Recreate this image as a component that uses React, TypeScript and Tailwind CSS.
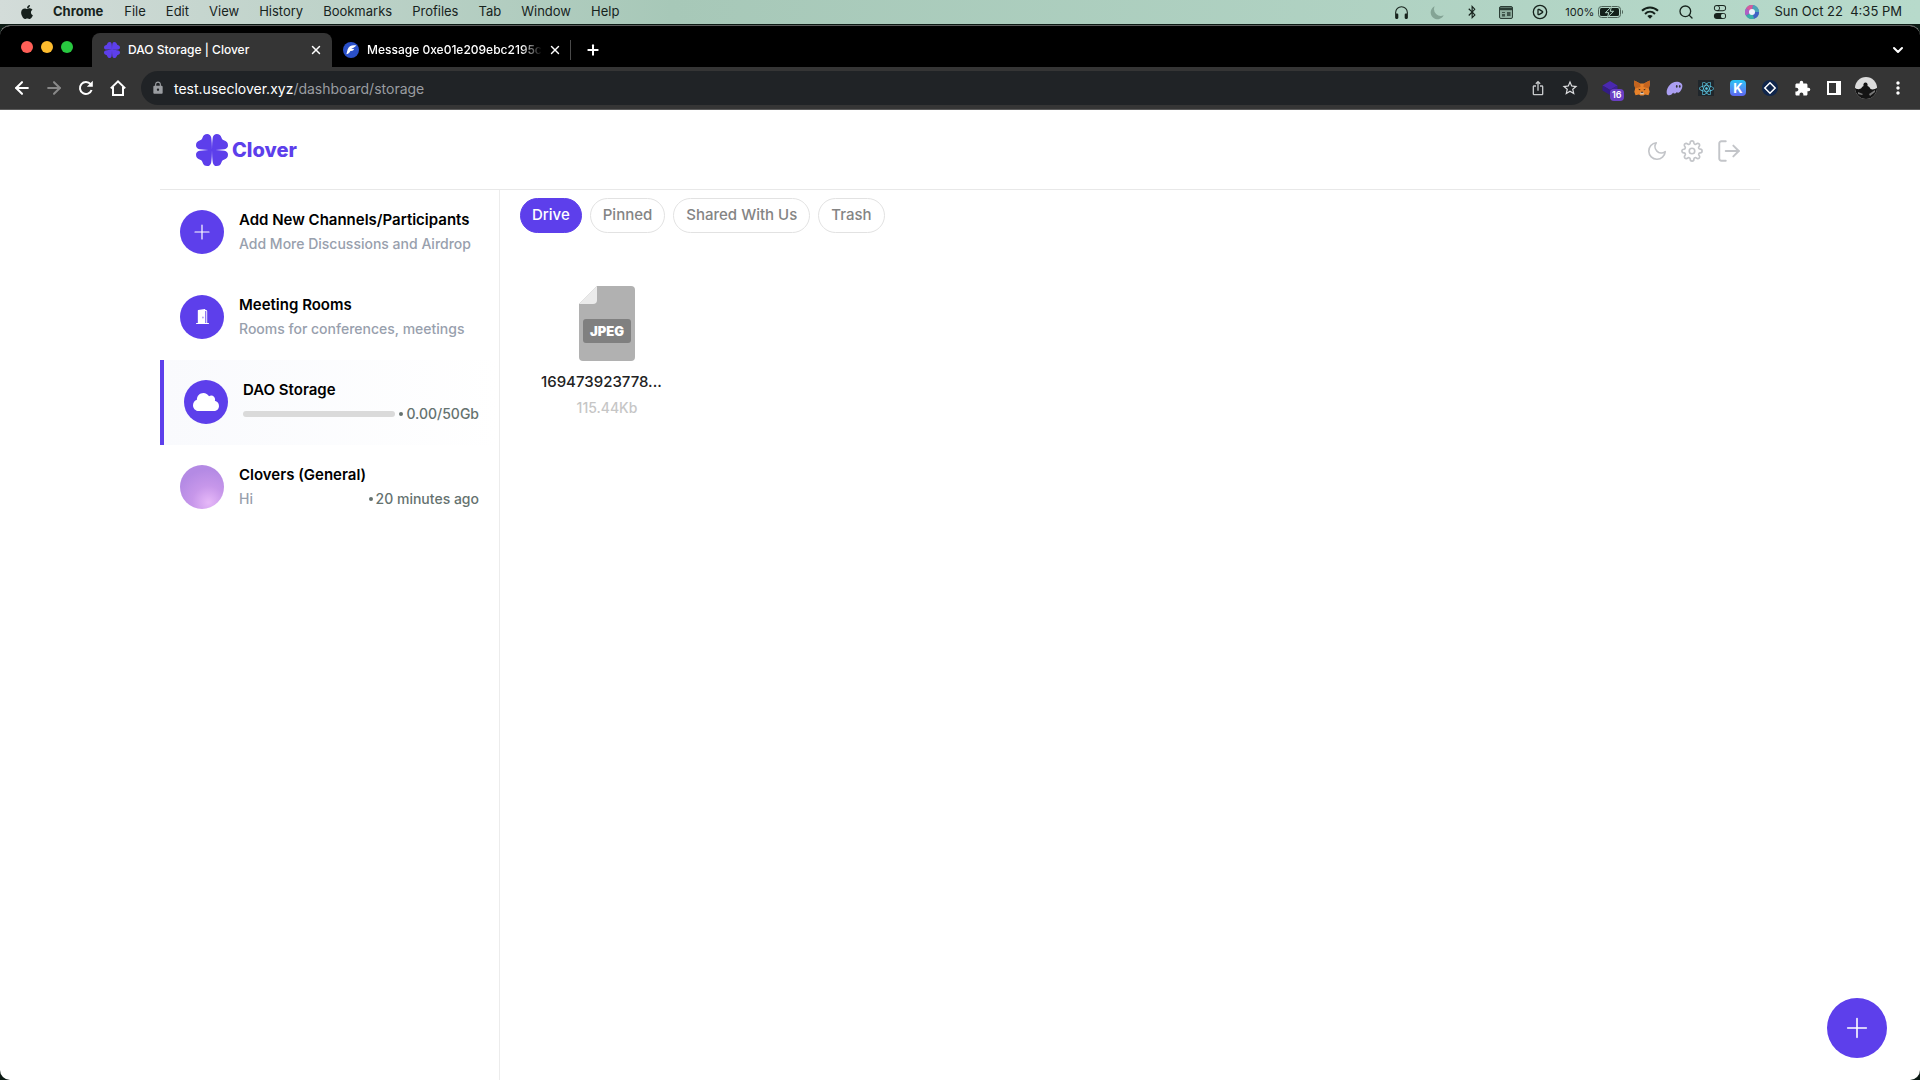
import type { ReactNode } from 'react';
import { BsDoorOpenFill, BsHeadphones, BsToggles } from 'react-icons/bs';
import { FaApple, FaBluetoothB, FaCloud, FaReact } from 'react-icons/fa';
import { FiMoon, FiSettings } from 'react-icons/fi';
import { HiMoon } from 'react-icons/hi';
import { MdExtension, MdIosShare, MdLock, MdMoreVert, MdStarBorder } from 'react-icons/md';
import { ArrowLeft, ArrowRight, ChevronDown, CirclePlay, LogOut, Plus, Search, X } from 'lucide-react';

const MENUS = ['File', 'Edit', 'View', 'History', 'Bookmarks', 'Profiles', 'Tab', 'Window', 'Help'];
const FILTERS = ['Drive', 'Pinned', 'Shared With Us', 'Trash'];

function Clover({ className }: { className: string }) {
  const leaf =
    'M16 16C15.9 11 15.8 7 15.2 3.6C14.8 1.2 13.2 0 11.2 0C8.8 0 7.2 1.4 6.6 3.6C6.2 5.2 5.2 6.2 3.6 6.6C1.4 7.2 0 8.8 0 11.2C0 13.2 1.2 14.8 3.6 15.2C7 15.8 11 15.9 16 16Z';
  return (
    <svg viewBox="0 0 32 32" className={className} fill="#5d3feb" aria-hidden="true">
      {[0, 90, 180, 270].map((a) => (
        <path key={a} d={leaf} transform={`rotate(${a} 16 16)`} />
      ))}
    </svg>
  );
}

function Battery() {
  return (
    <svg viewBox="0 0 26 12" className="w-[26px] h-3" aria-hidden="true">
      <rect x="0.5" y="0.5" width="22" height="11" rx="3" fill="none" stroke="#4d6258" />
      <rect x="2" y="2" width="19" height="8" rx="1.5" fill="#13201a" />
      <path d="M24 4v4c1.3-.4 1.3-3.6 0-4z" fill="#4d6258" />
      <path d="M13.6.6 7.4 6.7h3.4l-1.4 4.7 6.2-6.1h-3.4z" fill="#13201a" stroke="#b3d6c6" strokeWidth="1" />
    </svg>
  );
}

function Wifi() {
  return (
    <svg viewBox="0 0 18 13" className="w-[18px] h-[13px]" fill="none" stroke="#13201a" strokeWidth="2" aria-hidden="true">
      <path d="M1 4.8c4.6-4.4 11.4-4.4 16 0" />
      <path d="M4 7.9c3-2.8 7-2.8 10 0" />
      <path d="M9 12.8 6.3 10c1.6-1.4 3.8-1.4 5.4 0z" fill="#13201a" stroke="none" />
    </svg>
  );
}

function Calendar() {
  return (
    <svg viewBox="0 0 14 13" className="w-[14px] h-[13px]" aria-hidden="true">
      <rect x="0.5" y="0.5" width="13" height="12" rx="1.5" fill="#8fae9f" stroke="#2c3e36" />
      <path d="M0 1.5h14v2.7H0z" fill="#2c3e36" />
      <path d="M3 6h3v1H3zm0 2h3v2.5H3zm5-2h3.5v4H8z" fill="#2c3e36" opacity=".8" />
    </svg>
  );
}

function Siri() {
  return (
    <svg viewBox="0 0 14 14" className="size-[14px]" aria-hidden="true">
      <circle cx="7" cy="7" r="7" fill="#5b6fb8" />
      <path d="M7 7 1 3.4A7 7 0 0 1 8 .1z" fill="#d65a9d" />
      <path d="M7 7 8 .1A7 7 0 0 1 14 7z" fill="#4aa5b8" />
      <path d="M7 7h7a7 7 0 0 1-5 6.7z" fill="#3f62c4" />
      <path d="M7 7 9 13.7A7 7 0 0 1 1 10.5z" fill="#3ab0a8" />
      <path d="M7 7 1 10.5A7 7 0 0 1 1 3.4z" fill="#b05fc4" />
      <circle cx="7" cy="7" r="3" fill="#eef2fb" />
    </svg>
  );
}

function Slot({ children, className = 'w-[34px]' }: { children: ReactNode; className?: string }) {
  return <span className={`flex items-center justify-center ${className}`}>{children}</span>;
}

function MenuBar() {
  return (
    <div className="flex h-6 items-center bg-gradient-to-r from-[#d3dcd9] via-[#a7c8b8] via-35% to-[#b7dacb] text-[13px] text-[#17231d]">
      <nav className="flex items-center gap-5 pl-[19px]" aria-label="Menu bar">
        <FaApple className="size-4 text-[#16201c]" />
        <button className="-ml-0.5 mr-px font-bold">Chrome</button>
        {MENUS.map((m) => (
          <button key={m}>{m}</button>
        ))}
      </nav>
      <div className="ml-auto flex items-center pr-[18px]">
        <Slot className="w-9"><BsHeadphones className="size-[17px]" /></Slot>
        <Slot className="w-9"><HiMoon className="size-[17px] text-[#84a495]" /></Slot>
        <Slot><FaBluetoothB className="size-[14px]" /></Slot>
        <Slot><Calendar /></Slot>
        <Slot><CirclePlay className="size-4" strokeWidth={2} /></Slot>
        <span className="ml-2 text-[11px]">100%</span>
        <span className="ml-1"><Battery /></span>
        <Slot className="ml-2 w-9"><Wifi /></Slot>
        <Slot className="w-9"><Search className="size-4" strokeWidth={2} /></Slot>
        <Slot className="w-8"><BsToggles className="size-[14px]" /></Slot>
        <Slot className="w-8"><Siri /></Slot>
        <span className="ml-1.5 whitespace-pre">Sun Oct 22  4:35 PM</span>
      </div>
    </div>
  );
}

function TabStrip() {
  return (
    <div className="flex h-[41px] items-end bg-black text-xs font-medium text-white">
      <div className="flex h-full w-[92px] items-center gap-2 pl-[21px]">
        <button className="size-3 rounded-full bg-[#ff5f57]" aria-label="Close window" />
        <button className="size-3 rounded-full bg-[#febc2e]" aria-label="Minimize window" />
        <button className="size-3 rounded-full bg-[#28c840]" aria-label="Zoom window" />
      </div>
      <div className="flex h-[34px] w-[240px] items-center rounded-t-lg bg-[#353535] pl-3 pr-[9px]">
        <Clover className="size-4" />
        <span className="ml-2 flex-1 truncate">DAO Storage | Clover</span>
        <button aria-label="Close tab"><X className="size-[14px]" strokeWidth={2.5} /></button>
      </div>
      <div className="flex h-[34px] w-[238px] items-center pl-[11px] pr-2">
        <svg viewBox="0 0 16 16" className="size-4 shrink-0" aria-hidden="true">
          <circle cx="8" cy="8" r="8" fill="#2a50c8" />
          <path d="M13.4 3.4C9 2.6 5.6 4 4.6 7.4L3.4 12.2c2.4-.4 3.4-1.6 4-3.2 2 .2 3.2-.5 3.8-2.2-1.3.4-2.2.4-3 .1 1-.9 3.3-1.3 5.2-3.5z" fill="#fff" />
        </svg>
        <span className="ml-2 min-w-0 flex-1 whitespace-nowrap [mask-image:linear-gradient(to_right,#000_88%,transparent)]">
          Message 0xe01e209ebc2195c
        </span>
        <button className="ml-1.5" aria-label="Close tab"><X className="size-[14px]" strokeWidth={2.5} /></button>
      </div>
      <div className="flex h-[34px] items-center">
        <span className="h-5 w-px bg-[#4a4a4a]" />
        <button className="ml-[14px]" aria-label="New tab"><Plus className="size-4" strokeWidth={3} /></button>
      </div>
      <button className="ml-auto flex h-[34px] items-center pr-[14px]" aria-label="Search tabs">
        <ChevronDown className="size-4" strokeWidth={3} />
      </button>
    </div>
  );
}

function Extensions() {
  return (
    <div className="ml-1.5 mr-1.5 flex items-center">
      <button className="relative flex w-8 justify-center" aria-label="Extension, 16 items">
        <svg viewBox="0 0 16 16" className="size-4" aria-hidden="true">
          <path d="M8 1 15.5 5.5 8 10 .5 5.5z" fill="#4a28b0" />
          <path d="M.5 5.5 8 10v5L.5 10.5z" fill="#331c85" />
          <path d="M15.5 5.5 8 10v5l7.5-4.5z" fill="#3c2196" />
        </svg>
        <span className="absolute left-4 top-[9px] rounded-sm bg-[#6b3fc4] px-0.5 text-[9px] font-semibold leading-3 text-white">16</span>
      </button>
      <button className="flex w-8 justify-center" aria-label="MetaMask">
        <svg viewBox="0 0 16 16" className="size-4" aria-hidden="true">
          <path d="M.4.6 6 3.4h4L15.6.6l.2 4-1 4 .9 3.2-1.2 3.5-3.5-.9-1.4 1.2H6.4L5 14.4l-3.5.9L.3 11.8l.9-3.2-1-4z" fill="#e8822a" />
          <path d="M.4.6 6 3.4 6.6 7 1.2 8.6l-1-4zM15.6.6 10 3.4 9.4 7l5.4 1.6 1-4z" fill="#c4641f" />
          <path d="m4 8.8 2.4.4-.4 1.3zM12 8.8l-2.4.4.4 1.3z" fill="#3b2a20" />
          <path d="M6.6 12h2.8l.5 2.2H6.1z" fill="#d9c9bb" />
          <path d="M7 11.8h2l.3 1H6.7z" fill="#33241c" />
        </svg>
      </button>
      <button className="flex w-8 justify-center" aria-label="Phantom">
        <svg viewBox="0 0 18 16" className="w-[17px] h-[15px]" aria-hidden="true">
          <path d="M11.2.8C5.2.8.8 6.8.6 11.6c-.1 2.6 1.2 3.6 2.6 3.6 2.2 0 3.4-1.6 4.4-3 .1 1.6 2.6 1.6 3.9-.5.7 1.5 2.7.7 3.9-1.1C16.6 8.8 17.4 7.2 17.4 5.4c0-2.9-2.6-4.6-6.2-4.6z" fill="#ab9ff2" />
          <ellipse cx="11.4" cy="5.8" rx=".9" ry="1.5" fill="#353535" />
          <ellipse cx="14.6" cy="5.8" rx=".9" ry="1.5" fill="#353535" />
        </svg>
      </button>
      <button className="flex w-8 justify-center" aria-label="React Developer Tools">
        <span className="flex size-4 items-center justify-center bg-[#20262b]"><FaReact className="size-[15px] text-[#5ccbe8]" /></span>
      </button>
      <button className="flex w-8 justify-center" aria-label="Keplr">
        <span className="flex size-4 items-center justify-center rounded-sm bg-gradient-to-b from-[#1fc4f4] to-[#5a63f0] text-[13px] font-bold leading-4 text-white">K</span>
      </button>
      <button className="flex w-8 justify-center" aria-label="Wallet">
        <svg viewBox="0 0 16 16" className="size-4" aria-hidden="true">
          <circle cx="8" cy="8" r="8" fill="#10264c" />
          <path d="M8 2.8 13.2 8 8 13.2 2.8 8z" fill="none" stroke="#fff" strokeWidth="1.5" />
        </svg>
      </button>
      <button className="flex w-8 justify-center" aria-label="Extensions"><MdExtension className="size-[17px] text-white" /></button>
      <button className="flex w-8 justify-center" aria-label="Side panel">
        <svg viewBox="0 0 14 14" className="size-[14px]" aria-hidden="true">
          <path d="M0 0h14v14H0zM2 2v10h7V2z" fill="#fff" fillRule="evenodd" />
        </svg>
      </button>
      <button className="flex w-8 justify-center" aria-label="Profile">
        <svg viewBox="0 0 22 22" className="size-[22px]" aria-hidden="true">
          <clipPath id="avatar"><circle cx="11" cy="11" r="11" /></clipPath>
          <g clipPath="url(#avatar)">
            <path d="M0 0h22v22H0z" fill="#dcdcdc" />
            <path d="M0 11c3 2 5 1 6.5 0 .5-1 1-1.5 2-2-.5-2 .5-3.5 2-3.5s2.5 1.5 2 3.5c1.5.5 2.5 1.5 3 3 2.5 1 4.5 0 6.5-1v11H0z" fill="#141414" />
            <path d="m3 15 5 2-1 1-4-1zm11 2 6-4v2l-5 4z" fill="#777" />
          </g>
        </svg>
      </button>
      <button className="flex w-8 justify-center" aria-label="Chrome menu"><MdMoreVert className="size-5 text-white" /></button>
    </div>
  );
}

function Toolbar() {
  return (
    <div className="flex h-[43px] items-center border-b border-[#5c5c5c] bg-[#353535] text-white">
      <div className="ml-1.5 mr-[7px] flex items-center">
        <button className="flex w-8 justify-center" aria-label="Back"><ArrowLeft className="size-5" strokeWidth={2.5} /></button>
        <button className="flex w-8 justify-center" aria-label="Forward"><ArrowRight className="size-5 text-[#888]" strokeWidth={2.5} /></button>
        <button className="flex w-8 justify-center" aria-label="Reload">
          <svg viewBox="0 0 16 16" className="size-4" fill="none" stroke="#fff" strokeWidth="2" aria-hidden="true">
            <path d="M13.6 10A6 6 0 1 1 12.6 4.2" />
            <path d="M14.8.8v6H8.8z" fill="#fff" stroke="none" />
          </svg>
        </button>
        <button className="flex w-8 justify-center" aria-label="Home">
          <svg viewBox="0 0 16 16" className="size-4" fill="none" stroke="#fff" strokeWidth="2" aria-hidden="true">
            <path d="M.8 8.4 8 1.4l7.2 7" />
            <path d="M3 7v8h10V7" />
          </svg>
        </button>
      </div>
      <div className="flex h-[34px] flex-1 items-center rounded-full bg-[#202326] pl-[10px] pr-[9px]">
        <MdLock className="size-[14px] text-[#9a9da1]" />
        <span className="ml-[9px] text-[14px] text-[#9a9da1]"><span className="text-white">test.useclover.xyz</span>/dashboard/storage</span>
        <button className="ml-auto" aria-label="Share"><MdIosShare className="size-4 text-[#c6c8ca]" /></button>
        <button className="ml-[15px]" aria-label="Bookmark"><MdStarBorder className="size-[18px] text-[#dcdddf]" /></button>
      </div>
      <Extensions />
    </div>
  );
}

function Header() {
  return (
    <header className="flex h-20 items-center justify-between border-b border-[#e8e8e8] pl-9 pr-[18px]">
      <a href="#home" className="flex items-center gap-1 text-xl font-extrabold text-[#5d3feb]">
        <Clover className="size-8" />
        Clover
      </a>
      <div className="mt-0.5 flex items-center gap-[13px] text-[#c3c5c9]">
        <button aria-label="Dark mode"><FiMoon className="size-[22px]" strokeWidth={1.8} /></button>
        <button aria-label="Settings"><FiSettings className="size-[22px]" strokeWidth={1.8} /></button>
        <button aria-label="Log out"><LogOut className="size-[26px]" strokeWidth={1.8} /></button>
      </div>
    </header>
  );
}

type RowProps = { icon: ReactNode; title: string; children: ReactNode; active?: boolean; fill?: string };

function Row({ icon, title, children, active = false, fill = 'bg-[#5d3feb]' }: RowProps) {
  return (
    <a
      href="#channel"
      className={`flex h-[85px] items-center gap-[15px] px-5 pb-0.5 ${active ? 'border-l-4 border-[#5d3feb] bg-gradient-to-r from-[#f9fafd] to-white' : ''}`}
    >
      <span className={`flex size-11 shrink-0 items-center justify-center rounded-full text-white ${fill}`}>{icon}</span>
      <span className="min-w-0 flex-1">
        <span className="block truncate text-[15px] font-semibold leading-6 text-black">{title}</span>
        <span className="flex items-center whitespace-nowrap text-[14px] font-medium leading-6 text-[#98a0ad]">{children}</span>
      </span>
    </a>
  );
}

function Note({ children }: { children: string }) {
  return (
    <span className="ml-auto flex items-center gap-[3px] pl-1 text-[#65726f]">
      <span className="size-1 rounded-full bg-[#65726f]" />
      {children}
    </span>
  );
}

function Sidebar() {
  return (
    <aside className="w-[340px] shrink-0 border-r border-[#ececec]">
      <Row icon={<Plus className="size-6" strokeWidth={1.2} />} title="Add New Channels/Participants">
        Add More Discussions and Airdrop
      </Row>
      <Row icon={<BsDoorOpenFill className="size-[15px]" />} title="Meeting Rooms">
        Rooms for conferences, meetings
      </Row>
      <Row active icon={<FaCloud className="size-[26px]" />} title="DAO Storage">
        <progress
          value={0}
          max={50}
          aria-label="Storage used"
          className="h-1.5 min-w-0 flex-1 appearance-none overflow-hidden rounded-full bg-[#dadada] [&::-webkit-progress-bar]:bg-[#dadada]"
        />
        <Note>0.00/50Gb</Note>
      </Row>
      <Row fill="bg-[radial-gradient(circle_at_65%_85%,#e6b8f8_0%,#c797ea_35%,#b48ae4_70%)]" icon={null} title="Clovers (General)">
        Hi
        <Note>20 minutes ago</Note>
      </Row>
    </aside>
  );
}

function FileCard() {
  return (
    <button className="flex w-[132px] flex-col items-center">
      <svg viewBox="0 0 56 75" className="h-[75px] w-14" aria-hidden="true">
        <path d="M18 0h34a4 4 0 0 1 4 4v67a4 4 0 0 1-4 4H4a4 4 0 0 1-4-4V18z" fill="#b1b1b1" />
        <path d="M18 0v14a4 4 0 0 1-4 4H0z" fill="#ebebeb" />
        <rect x="4" y="33" width="48" height="24" rx="3" fill="#808080" />
        <text x="28" y="50" textAnchor="middle" fill="#fff" fontSize="13" fontWeight="900">JPEG</text>
      </svg>
      <span className="mt-[9px] self-start text-[15px] font-medium leading-6 text-[#222]">169473923778...</span>
      <span className="mt-1 text-[14px] font-medium leading-5 text-[#c6c6c6]">115.44Kb</span>
    </button>
  );
}

export default function App() {
  return (
    <div className="flex min-h-screen flex-col bg-[#0c1a14] font-['Inter',sans-serif]">
      <MenuBar />
      <div className="mt-px flex flex-1 flex-col overflow-hidden rounded-[10px] border-t border-[#5c5c5c] bg-white">
        <TabStrip />
        <Toolbar />
        <div className="mx-auto flex w-full max-w-[1600px] flex-1 flex-col">
          <Header />
          <div className="flex flex-1">
            <Sidebar />
            <main className="flex-1 px-5 pt-2">
              <div className="flex gap-2">
                {FILTERS.map((f, i) => (
                  <button
                    key={f}
                    className={`h-[35px] rounded-full border text-[15px] font-medium ${
                      i === 0 ? 'border-[#5d3feb] bg-[#5d3feb] px-[11px] text-white' : 'border-[#e2e2e2] px-3 text-[#848484]'
                    }`}
                  >
                    {f}
                  </button>
                ))}
              </div>
              <div className="flex px-[21px] pt-[53px]">
                <FileCard />
              </div>
            </main>
          </div>
        </div>
      </div>
      <button className="fixed bottom-[22px] right-[33px] flex size-[60px] items-center justify-center rounded-full bg-[#5d3feb] text-white" aria-label="Upload">
        <Plus className="size-8" strokeWidth={1.2} />
      </button>
    </div>
  );
}
